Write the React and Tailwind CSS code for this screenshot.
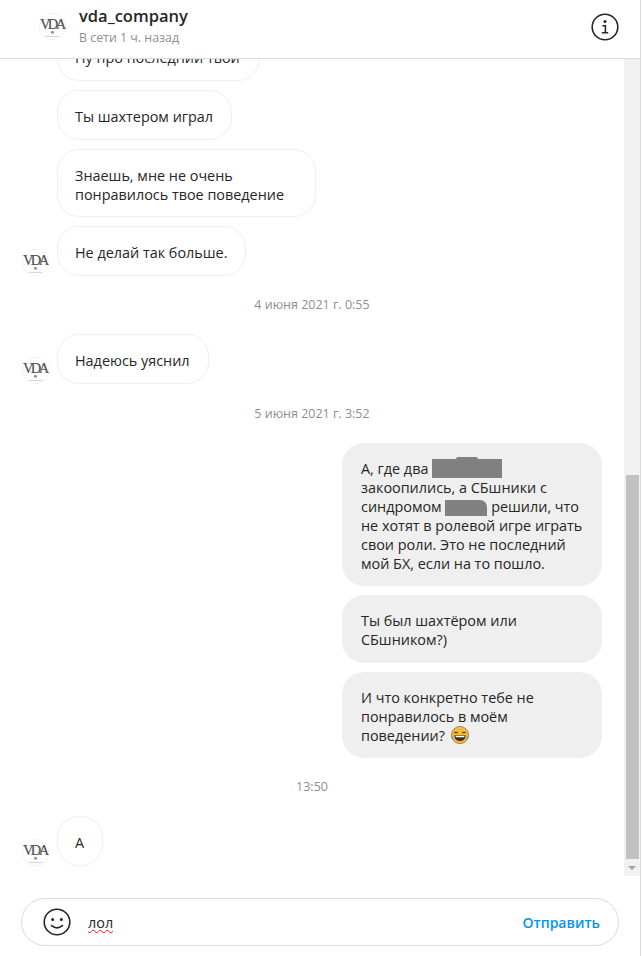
import React from "react";

const Avatar = ({ className }) => (
  <svg viewBox="0 0 52 52" className={"w-[27px] h-[27px] shrink-0 " + (className || "")}>
    <circle cx="26" cy="26" r="25.5" fill="#fff" stroke="#e6e6e6" />
    <text x="24.5" y="30.5" textAnchor="middle" letterSpacing="-5" fontFamily="Liberation Serif, serif" fontSize="28" fill="#4f4f4f" stroke="#4f4f4f" strokeWidth="0.4">VDA</text>
    <circle cx="26" cy="37" r="3" fill="#b08d78" />
    <rect x="13" y="44" width="26" height="2" fill="#d4d4d4" />
  </svg>
);

const Bubble = ({ children, className }) => (
  <div className={"border border-[#efefef] rounded-[22px] pl-[17px] pr-[18px] pt-[16px] bg-white " + (className || "w-fit pb-[13px]")}>{children}</div>
);

const Mine = ({ children, className }) => (
  <div className={"w-[260px] ml-auto rounded-[22px] bg-[#efefef] pl-[19px] pr-[10px] pt-[16px] " + (className || "pb-[13px]")}>{children}</div>
);

const Stamp = ({ children }) => (
  <div className="text-center text-[12.5px] text-[#8e8e8e] h-[18px] leading-[18px]">{children}</div>
);

const Row = ({ children, className }) => (
  <div className={"flex items-end pl-[22px] " + (className || "")}>
    <Avatar />
    <div className="ml-[8px]">{children}</div>
  </div>
);

export default function App() {
  return (
    <div
      className="w-[641px] h-[956px] bg-white flex flex-col text-[14.4px] leading-[19px] text-[#262626] border-r border-[#dbdbdb] overflow-hidden"
      style={{ fontFamily: '"Open Sans", "Noto Sans", sans-serif' }}
    >
      {/* header */}
      <div className="h-[59px] shrink-0 border-b border-[#dbdbdb] flex items-center pl-[39px] pr-[21px]">
        <Avatar className="-mt-[5px]" />
        <div className="ml-[13px] flex-1 -mt-[5px]">
          <div className="text-[16.5px] leading-[20px] font-semibold -mt-[1px]">vda_company</div>
          <div className="text-[12.4px] leading-[16px] mt-[4px] text-[#8e8e8e]">В сети 1 ч. назад</div>
        </div>
        <svg viewBox="0 0 28 28" className="w-[28px] h-[28px] -mt-[4px]" fill="none" stroke="#262626">
          <circle cx="14" cy="14" r="12.8" strokeWidth="1.6" />
          <circle cx="14" cy="8.6" r="1.5" fill="#262626" stroke="none" />
          <path d="M11.4 12.7h3v7M10.8 19.8h6.4" strokeWidth="1.6" />
        </svg>
      </div>

      <div className="h-[817px] shrink-0 flex overflow-hidden">
        {/* messages */}
        <div className="flex-1 min-w-0">
          <div className="-mt-[28px] flex flex-col">
            <div className="pl-[57px] flex flex-col gap-[9px]">
              <Bubble className="w-[203px] pb-[13px]">Ну про последний твой</Bubble>
              <Bubble>Ты шахтером играл</Bubble>
              <Bubble className="w-[259px] pb-[12px]">Знаешь, мне не очень<br />понравилось твое поведение</Bubble>
            </div>
            <Row className="mt-[9px]"><Bubble>Не делай так больше.</Bubble></Row>
            <div className="mt-[20px]"><Stamp>4 июня 2021 г. 0:55</Stamp></div>
            <Row className="mt-[20px]"><Bubble>Надеюсь уяснил</Bubble></Row>
            <div className="mt-[21px]"><Stamp>5 июня 2021 г. 3:52</Stamp></div>
            <div className="mt-[20px] pr-[22px] flex flex-col gap-[9px]">
              <Mine>
                А, где два{" "}
                <span className="relative inline-block w-[70px] h-[19px] bg-[#808080] align-top">
                  <span className="absolute -top-[2px] left-[24px] w-[22px] h-[4px] rounded-full bg-[#808080]"></span>
                </span><br />
                закоопились, а СБшники с<br />
                синдромом{" "}
                <span className="relative top-[3px] inline-block w-[42px] h-[16px] bg-[#808080] rounded-tr-[7px] align-top"></span>{" "}
                решили, что<br />
                не хотят в ролевой игре играть<br />
                свои роли. Это не последний<br />
                мой БХ, если на то пошло.
              </Mine>
              <Mine className="pb-[14px]">Ты был шахтёром или<br />СБшником?)</Mine>
              <Mine>
                И что конкретно тебе не<br />
                понравилось в моём<br />
                поведении?{" "}
                <svg viewBox="0 0 18 18" className="inline-block w-[18px] h-[18px] align-top ml-[2px]">
                  <circle cx="9" cy="9" r="8.6" fill="#f5b93b" stroke="#6b5a2a" strokeWidth="0.6" />
                  <path d="M3.4 7.2q1.6-2 3.2 0M11.4 7.2q1.6-2 3.2 0" fill="none" stroke="#40351c" strokeWidth="1.1" />
                  <path d="M3.4 9.3h11.2q0 5.8-5.6 5.8t-5.6-5.8z" fill="#4a2a1c" />
                  <path d="M4.4 9.8h9.2l-.5 1.5H4.9z" fill="#fff" />
                  <path d="M.6 9.6q2.2 1.6 2.4 4.2-2.4-.6-2.4-4.2zM17.4 9.6q-2.2 1.6-2.4 4.2 2.4-.6 2.4-4.2z" fill="#4aa3e8" />
                </svg>
              </Mine>
            </div>
            <div className="mt-[20px]"><Stamp>13:50</Stamp></div>
            <Row className="mt-[20px]"><Bubble>А</Bubble></Row>
          </div>
        </div>

        {/* scrollbar */}
        <div className="w-[16px] shrink-0 bg-[#f1f1f1] flex flex-col">
          <div className="h-[416px]"></div>
          <div className="h-[384px] bg-[#c1c1c1] ml-[2px] mr-[1px]"></div>
          <div className="flex-1 flex items-center justify-center pt-[1px]">
            <div className="w-0 h-0 border-x-[4px] border-x-transparent border-t-[4px] border-t-[#a3a3a3]"></div>
          </div>
        </div>
      </div>

      {/* input */}
      <div className="flex-1 pl-[21px] pr-[21px] pt-[22px]">
        <div className="h-[48px] border border-[#dbdbdb] rounded-[24px] flex items-center pl-[21px] pr-[18px]">
          <svg viewBox="0 0 28 28" className="w-[28px] h-[28px]" fill="none" stroke="#262626">
            <circle cx="14" cy="14" r="12.8" strokeWidth="1.6" />
            <circle cx="9.6" cy="11.6" r="1.5" fill="#262626" stroke="none" />
            <circle cx="18.4" cy="11.6" r="1.5" fill="#262626" stroke="none" />
            <path d="M8.6 17.6q5.4 4.4 10.8 0" strokeWidth="1.6" strokeLinecap="round" />
          </svg>
          <span className="ml-[17px] mt-[1px] flex-1 underline decoration-wavy decoration-[#e02020] decoration-1">лол</span>
          <span className="text-[14px] mt-[1px] text-[#0095f6] font-semibold">Отправить</span>
        </div>
      </div>
    </div>
  );
}
